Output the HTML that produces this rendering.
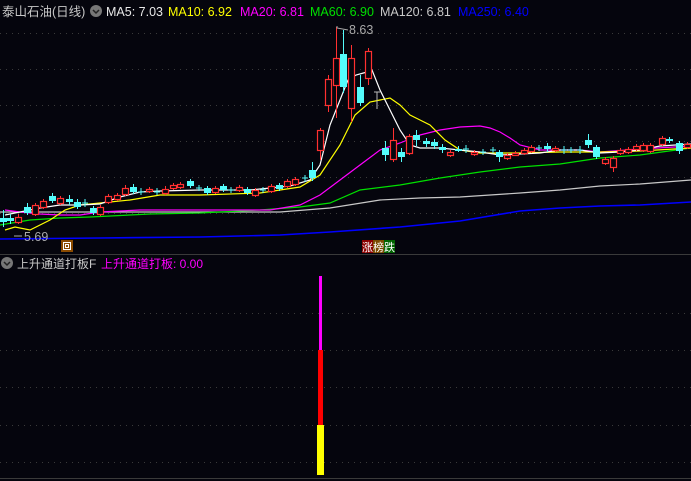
<!DOCTYPE html>
<html><head><meta charset="utf-8"><style>
html,body{margin:0;padding:0;background:#05050d;width:691px;height:481px;overflow:hidden}
svg{display:block}
text{font-family:"Liberation Sans","Noto Sans CJK SC",sans-serif;font-size:12.5px}
</style></head><body>
<svg id="s" width="691" height="481" xmlns="http://www.w3.org/2000/svg">
<rect width="691" height="481" fill="#05050d"/>
<g stroke="#3a3a3a" stroke-dasharray="1,5" stroke-width="1">
<line x1="0" y1="33.5" x2="691" y2="33.5"/><line x1="0" y1="69.5" x2="691" y2="69.5"/>
<line x1="0" y1="105.5" x2="691" y2="105.5"/><line x1="0" y1="141.5" x2="691" y2="141.5"/>
<line x1="0" y1="177.5" x2="691" y2="177.5"/><line x1="0" y1="213.5" x2="691" y2="213.5"/>
<line x1="0" y1="313.5" x2="691" y2="313.5"/><line x1="0" y1="350.5" x2="691" y2="350.5"/>
<line x1="0" y1="387.5" x2="691" y2="387.5"/><line x1="0" y1="425.5" x2="691" y2="425.5"/>
<line x1="0" y1="462.5" x2="691" y2="462.5"/>
</g>
<line x1="0" y1="254.5" x2="691" y2="254.5" stroke="#3a3a3a"/>
<line x1="0" y1="478.5" x2="691" y2="478.5" stroke="#3a3a3a"/>
<g id="ma" fill="none" stroke-width="1.2">
<polyline stroke="#0000ff" stroke-width="1.6" points="0,239 100,238 200,237 280,235 330,232 400,227 460,221 520,211 560,208 600,206 640,205 691,202"/>
<polyline stroke="#c8c8c8" points="0,212 100,212 200,212 280,212 330,208 380,200 420,198 460,197 520,193 560,190 600,186 640,184 691,180"/>
<polyline stroke="#00e000" points="0,225 30,220 60,218 90,217 150,214 200,213 260,210 300,207 330,203 360,190 400,185 440,178 480,172 520,167 560,164 600,158 640,155 691,148"/>
<polyline stroke="#ff00ff" points="5,210 20,212 40,214 60,215 80,215 100,212 140,210 180,210 240,210 270,210 300,205 320,195 340,180 360,165 380,150 400,143 420,135 440,130 460,127 480,126 490,128 500,132 510,138 520,145 540,150 580,150 600,152 640,149 691,146"/>
<polyline stroke="#ffff00" points="5,230 15,227 30,230 50,220 65,210 80,205 100,203 130,200 160,195 200,195 260,193 300,187 320,175 340,145 355,115 370,102 380,100 390,98 400,105 410,115 420,120 430,125 445,140 460,150 480,153 520,153 560,152 600,152 640,151 691,148"/>
<polyline stroke="#ffffff" points="5,215 20,212 40,208 60,205 80,205 100,204 120,197 140,192 160,191 200,190 250,190 290,186 310,180 320,165 330,125 340,100 348,80 356,75 367,72 372,70 380,90 390,110 400,130 410,145 420,148 440,148 460,150 480,152 500,155 520,154 540,153 560,150 580,150 600,153 620,152 640,150 660,146 691,144"/>
</g>
<g id="c"></g>
<text x="2" y="16" fill="#c8c8c8">泰山石油(日线)</text>
<circle cx="96" cy="11" r="6" fill="#777"/><path d="M93 10l3 3 3-3" stroke="#222" fill="none" stroke-width="1.5"/>
<text x="106" y="16" fill="#e8e8e8">MA5: 7.03</text>
<text x="168" y="16" fill="#ffff00">MA10: 6.92</text>
<text x="240" y="16" fill="#ff00ff">MA20: 6.81</text>
<text x="310" y="16" fill="#00e000">MA60: 6.90</text>
<text x="380" y="16" fill="#c8c8c8">MA120: 6.81</text>
<text x="458" y="16" fill="#0000ff">MA250: 6.40</text>
<path d="M337 26 L337 28 L348 30" stroke="#aaa" fill="none"/>
<text x="349" y="34" fill="#aaa">8.63</text>
<path d="M14 236 L22 236" stroke="#aaa"/>
<text x="24" y="241" fill="#aaa">5.69</text>
<rect x="61" y="240" width="12" height="12" fill="#8a4a00"/><rect x="63.5" y="242.5" width="7" height="7" fill="none" stroke="#fff"/><rect x="65.5" y="244.5" width="3" height="3" fill="none" stroke="#fff" stroke-width="1"/>
<rect x="362" y="240" width="11" height="13" fill="#8b0000"/><rect x="373" y="240" width="11" height="13" fill="#7a4a00"/><rect x="384" y="240" width="11" height="13" fill="#006400"/>
<text x="362" y="251" fill="#fff" style="font-size:11px">涨榜跌</text>
<circle cx="7" cy="263" r="6" fill="#777"/><path d="M4 262l3 3 3-3" stroke="#222" fill="none" stroke-width="1.5"/>
<text x="17" y="268" fill="#c8c8c8" style="font-size:12px">上升通道打板F</text>
<text x="101" y="268" fill="#ff00ff" style="font-size:12px">上升通道打板: 0.00</text>
<rect x="319" y="276" width="3" height="74" fill="#ff00ff"/>
<rect x="318" y="350" width="5" height="75" fill="#ff0000"/>
<rect x="317" y="425" width="7" height="50" fill="#ffff00"/>
</svg>
<script>
var C=[[3,'c',218,222,210,227],[10,'c',218,221,214,224],[18,'r',217,222,214,224],[27,'c',207,213,203,215],[35,'r',205,214,203,216],[43,'r',201,207,199,209],[52,'c',196,201,193,203],[60,'r',198,203,196,205],[69,'c',199,202,195,205],[77,'c',202,207,199,209],[85,'x',203,203,199,207],[93,'c',208,213,206,215],[100,'r',207,214,205,216],[108,'r',196,202,194,204],[117,'r',195,199,193,201],[125,'r',188,194,185,196],[133,'c',187,192,184,194],[141,'x',192,192,188,195],[149,'r',189,191,187,193],[157,'x',192,192,188,195],[165,'r',189,193,186,195],[173,'r',185,188,183,190],[180,'r',184,187,182,189],[190,'c',181,186,179,188],[199,'x',188,188,185,191],[207,'c',188,193,186,195],[215,'r',188,192,186,194],[223,'c',186,190,184,192],[231,'x',190,190,187,193],[239,'r',187,190,185,192],[247,'c',189,193,187,195],[255,'r',190,195,188,197],[263,'x',190,190,187,193],[271,'r',186,191,184,193],[279,'c',185,189,183,191],[287,'r',181,186,179,188],[295,'r',179,184,177,186],[305,'x',178,178,175,182],[312,'c',170,178,162,181],[320,'r',130,150,128,160],[328,'r',79,105,75,112],[336,'r',58,85,27,118],[343,'c',54,87,30,93],[351,'r',58,108,45,122],[360,'c',87,103,75,106],[368,'r',51,78,48,85],[377,'g',92,92,92,109],[385,'c',148,155,141,161],[393,'r',140,159,128,162],[401,'c',152,157,148,162],[409,'r',136,153,134,155],[416,'c',135,140,130,146],[426,'c',141,144,138,147],[434,'c',142,146,139,149],[442,'c',147,150,144,153],[450,'r',152,155,150,157],[458,'c',149,150,146,152],[466,'x',149,149,145,153],[474,'r',152,154,150,156],[483,'x',152,152,149,155],[493,'x',150,150,147,153],[499,'c',152,157,150,162],[507,'r',155,158,153,160],[515,'r',153,154,151,156],[524,'r',150,153,148,155],[531,'r',147,151,145,153],[539,'x',148,148,145,151],[547,'c',146,149,143,152],[555,'r',148,150,146,152],[564,'x',150,150,146,154],[571,'x',150,150,147,153],[580,'x',150,150,146,154],[588,'c',140,145,134,148],[596,'c',147,157,145,159],[605,'r',159,163,157,165],[613,'r',158,167,156,172],[620,'r',150,153,148,155],[628,'r',149,152,147,154],[636,'r',146,149,144,151],[643,'r',145,150,143,152],[650,'r',145,151,143,153],[662,'r',138,144,136,146],[669,'c',139,141,137,143],[679,'c',143,151,141,154],[687,'r',144,147,142,149]];
var h='';C.forEach(function(a){var x=a[0],t=a[1],o=a[2],c=a[3],hi=a[4],lo=a[5];
var col=t=='r'?'#ff3030':t=='c'?'#54fcfc':t=='g'?'#bbb':'#54fcfc';
if(t=='x'||t=='g'){h+='<line x1="'+x+'" y1="'+hi+'" x2="'+x+'" y2="'+lo+'" stroke="'+col+'"/><line x1="'+(x-3)+'" y1="'+c+'" x2="'+(x+3)+'" y2="'+c+'" stroke="'+col+'"/>';return;}
h+='<line x1="'+(x+.5)+'" y1="'+hi+'" x2="'+(x+.5)+'" y2="'+lo+'" stroke="'+col+'"/>';
var bh=Math.max(c-o,2);
if(t=='r')h+='<rect x="'+(x-2.5)+'" y="'+(o+.5)+'" width="6" height="'+bh+'" fill="#05050d" stroke="'+col+'" stroke-width="1.2"/>';
else h+='<rect x="'+(x-3)+'" y="'+o+'" width="7" height="'+bh+'" fill="'+col+'"/>';});
document.getElementById('c').innerHTML=h;
</script>
</body></html>
